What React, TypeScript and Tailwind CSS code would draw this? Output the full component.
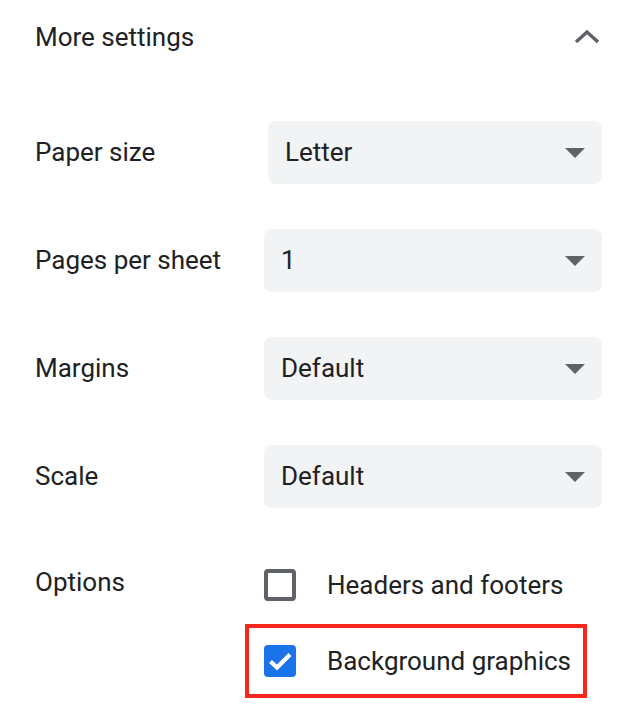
import React from "react";

function Caret() {
  return (
    <svg width="20" height="10" viewBox="0 0 20 10" className="shrink-0">
      <polygon points="0,0 20,0 10,10" fill="#5f6368" />
    </svg>
  );
}

function Select({ value, offset }: { value: string; offset?: boolean }) {
  return (
    <div
      className={
        "flex-1 h-[63px] rounded-[8px] bg-[#f1f3f4] flex items-center justify-between pl-[17px] pr-[17px] " +
        (offset ? "ml-[4px]" : "")
      }
    >
      <span>{value}</span>
      <Caret />
    </div>
  );
}

function Row({ label, value, offset }: { label: string; value: string; offset?: boolean }) {
  return (
    <div className="flex items-center h-[63px]">
      <div className="w-[229px] shrink-0">{label}</div>
      <Select value={value} offset={offset} />
    </div>
  );
}

export default function App() {
  return (
    <div
      className="w-[636px] h-[717px] bg-white text-[#202124] text-[26px] pl-[35px] pr-[34px] overflow-hidden"
      style={{ fontFamily: "Roboto, 'Liberation Sans', sans-serif" }}
    >
      <div className="h-[74px] flex items-center justify-between">
        <span>More settings</span>
        <svg width="26" height="16" viewBox="0 0 26 16" className="mr-[2px]">
          <path d="M2 13 L13 3 L24 13" stroke="#5f6368" strokeWidth="3.5" fill="none" />
        </svg>
      </div>
      <div className="mt-[47px] flex flex-col gap-[45px]">
        <Row label="Paper size" value="Letter" offset />
        <Row label="Pages per sheet" value="1" />
        <Row label="Margins" value="Default" />
        <Row label="Scale" value="Default" />
      </div>
      <div className="mt-[61px] flex">
        <div className="w-[229px] shrink-0 h-[32px] leading-[32px] -mt-[3px]">Options</div>
        <div className="flex flex-col">
          <div className="flex items-center h-[32px]">
            <div className="w-[32px] h-[32px] rounded-[4px] border-[4px] border-[#5f6368] box-border" />
            <span className="ml-[31px] leading-[32px]">Headers and footers</span>
          </div>
          <div className="-ml-[19px] mt-[23px] w-[342px] border-[4px] border-[#f5281b] pl-[15px] pt-[17px] pb-[17px] flex items-center">
            <svg width="32" height="32" viewBox="0 0 32 32" className="shrink-0">
              <rect x="0" y="0" width="32" height="32" rx="4" fill="#1a73e8" />
              <path d="M6.5 16.5 L13 22.5 L26 9.5" stroke="white" strokeWidth="4.2" fill="none" />
            </svg>
            <span className="ml-[31px] leading-[32px]">Background graphics</span>
          </div>
        </div>
      </div>
    </div>
  );
}
